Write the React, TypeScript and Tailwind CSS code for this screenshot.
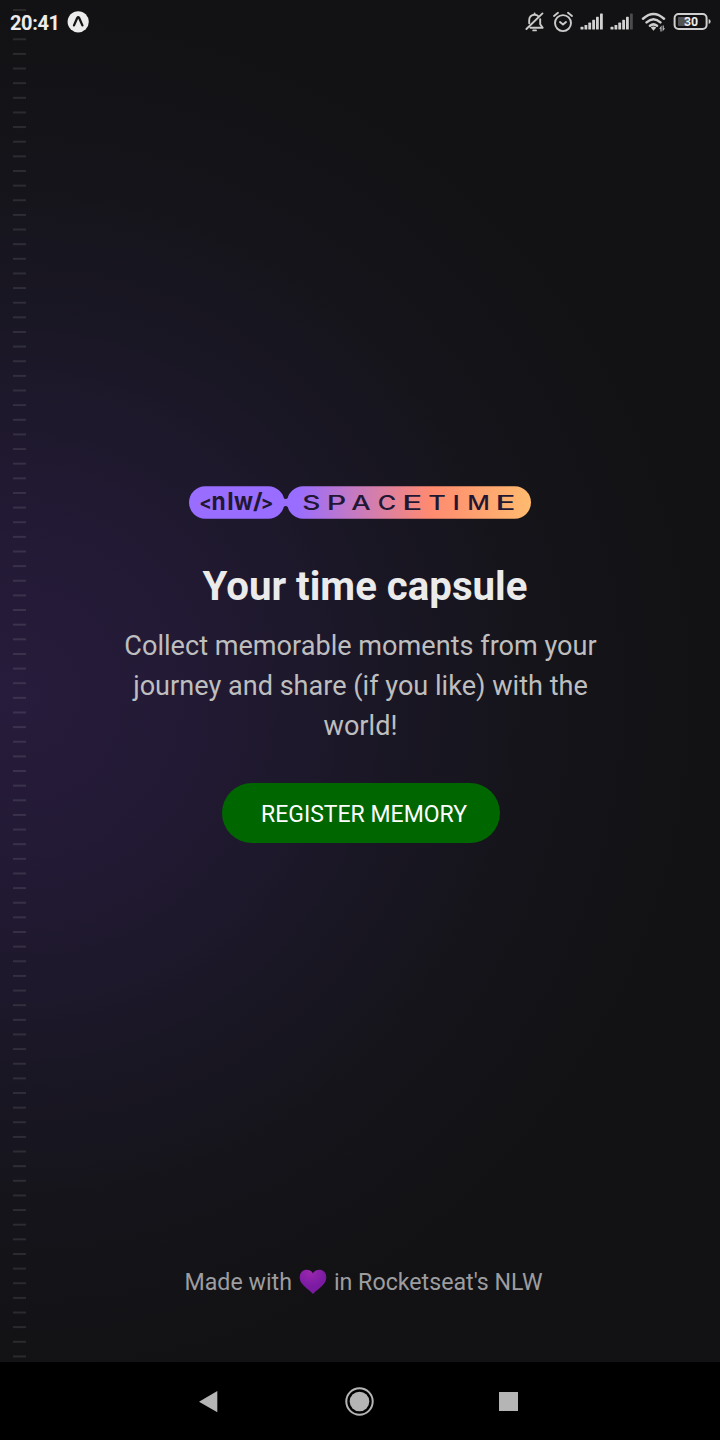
import React from "react";

const STRIPES = Array.from({ length: 93 }, (_, i) => 10 + i * 14.635);

type Glyph = { c: string; x: number; w: number; y: number; size: number };

const TAG: Glyph[] = [
  { c: "<", x: 199.3, w: 12.6, y: 509.4, size: 18.5 },
  { c: "n", x: 211.6, w: 14.2, y: 510, size: 25 },
  { c: "l", x: 227.2, w: 6.4, y: 510, size: 24 },
  { c: "w", x: 234, w: 19, y: 510, size: 25 },
  { c: "/", x: 253, w: 9.6, y: 509, size: 22 },
  { c: ">", x: 260.8, w: 12.6, y: 509.4, size: 18.5 },
];

const NAME: Glyph[] = [
  { c: "S", x: 302.2, w: 18.2, y: 510, size: 19.4 },
  { c: "P", x: 326.8, w: 19.5, y: 510, size: 19.4 },
  { c: "A", x: 351.3, w: 19.4, y: 510, size: 19.4 },
  { c: "C", x: 377.8, w: 18.4, y: 510, size: 19.4 },
  { c: "E", x: 402.2, w: 20, y: 510, size: 19.4 },
  { c: "T", x: 428.3, w: 17.6, y: 510, size: 19.4 },
  { c: "I", x: 452.5, w: 7.4, y: 510, size: 19.4 },
  { c: "M", x: 467.2, w: 22.6, y: 510, size: 19.4 },
  { c: "E", x: 495.6, w: 20, y: 510, size: 19.4 },
];

function Glyphs({ items }: { items: Glyph[] }) {
  return (
    <>
      {items.map((g) => (
        <text key={g.x} x={g.x} y={g.y} fontSize={g.size} textLength={g.w} lengthAdjust="spacingAndGlyphs">{g.c}</text>
      ))}
    </>
  );
}

function Background() {
  return (
    <svg className="absolute inset-0" width="720" height="1362" viewBox="0 0 720 1362" aria-hidden="true">
      <defs>
        <radialGradient id="glow" gradientUnits="userSpaceOnUse" cx="15" cy="695" r="690">
          <stop offset="0" stopColor="#271c3b" />
          <stop offset="0.22" stopColor="#231a36" />
          <stop offset="0.5" stopColor="#1b1727" />
          <stop offset="0.75" stopColor="#15141a" />
          <stop offset="1" stopColor="#121214" />
        </radialGradient>
      </defs>
      <rect width="720" height="1362" fill="url(#glow)" />
      {STRIPES.map((y) => (
        <rect key={y} x="13" y={y - 1} width="13" height="2" fill="#ffffff" opacity="0.1" />
      ))}
    </svg>
  );
}

function Signal({ weak }: { weak?: boolean }) {
  return (
    <svg width="24" height="18" viewBox="0 0 24 18" fill="#d2d2d2">
      <rect x="0.5" y="13.8" width="3" height="2.7" rx="0.6" />
      <rect x="4.5" y="12" width="2.8" height="4.5" rx="0.6" />
      <rect x="8.3" y="9.6" width="2.8" height="6.9" rx="0.6" />
      <rect x="12.2" y="6.8" width="2.8" height="9.7" rx="0.6" />
      <rect x="16" y="3.8" width="2.8" height="12.7" rx="0.6" />
      <rect x="20" y="0.6" width="2.8" height="15.9" rx="0.6" opacity={weak ? 0.3 : 1} />
    </svg>
  );
}

function StatusBar() {
  return (
    <header className="relative flex h-[43px] items-center pr-[8px] pl-[10px]">
      <span className="mt-[2px] w-[49px] text-[20px] leading-[24px] font-bold tracking-[-0.4px] text-[#ececec]">20:41</span>
      <svg className="ml-[8px]" width="22" height="22" viewBox="0 0 22 22">
        <circle cx="11.2" cy="10.8" r="10.6" fill="#ececec" />
        <path d="M7 14.4 10.2 7Q11.2 5.4 12.2 7L15.4 14.4" fill="none" stroke="#151516" strokeWidth="2.3" strokeLinecap="round" strokeLinejoin="round" />
      </svg>
      <div className="ml-auto flex items-center">
        <svg width="20" height="20" viewBox="0 0 20 20" fill="none" stroke="#cbcbcb" strokeWidth="1.9" strokeLinecap="round" strokeLinejoin="round">
          <path d="M4.2 11.3V8C4.2 5 6.3 2.8 9.6 2.8 11.2 2.8 12.5 3.4 13.4 4.3M15.2 7.1V12.2L17.7 15.7H5.5M9.6 2.5V1.4M8.2 18.4H11M1.4 17 17.5 1.4" />
        </svg>
        <svg className="ml-[7px]" width="22" height="22" viewBox="0 0 22 22" fill="none" stroke="#cbcbcb" strokeWidth="1.9" strokeLinecap="round" strokeLinejoin="round">
          <circle cx="11" cy="12.1" r="8" />
          <path d="M2 5 6 1.8M20 5 16 1.8M8 11 11 13.5 14 11" />
        </svg>
        <div className="ml-[6px] flex"><Signal /></div>
        <div className="ml-[6px] flex"><Signal weak /></div>
        <svg className="ml-[7px]" width="26" height="20" viewBox="0 0 26 20">
          <g fill="none" stroke="#cecece" strokeWidth="2.5" strokeLinecap="round">
            <path d="M2 6.7Q12.5-2.8 23 6.7M5.6 10.4Q12.5 4 19.4 10.4M9 13.8Q12.5 11 16 13.8" />
          </g>
          <path d="M9.8 15.5Q12.5 13.6 15.2 15.5L12.5 18.8Z" fill="#cecece" />
          <path d="M18.1 16.7 20.6 13.4V19.4H19.4V16.7ZM24.1 16.3 21.6 19.6V13.6H22.8V16.3Z" fill="#bbb" />
        </svg>
        <svg className="ml-[6px]" width="39" height="19" viewBox="0 0 39 19">
          <rect x="1.6" y="2" width="32" height="15" rx="4" fill="none" stroke="#cfcfcf" strokeWidth="2" />
          <rect x="5" y="5" width="10" height="9" rx="1" fill="#525252" />
          <path d="M35.6 7.2Q37.6 7.2 37.6 9.5T35.6 11.8Z" fill="#cfcfcf" />
          <text x="18" y="13.9" textAnchor="middle" fill="#ededed" fontSize="12.3" fontWeight="700" fontFamily="Roboto, sans-serif">30</text>
        </svg>
      </div>
    </header>
  );
}

function Logo() {
  return (
    <svg width="344" height="34" viewBox="188 485 344 34" role="img" aria-label="nlw spacetime">
      <defs>
        <linearGradient id="pill" gradientUnits="userSpaceOnUse" x1="297" y1="0" x2="531" y2="0">
          <stop offset="0" stopColor="#996dff" />
          <stop offset="0.57" stopColor="#ff8a70" />
          <stop offset="1" stopColor="#ffbb6f" />
        </linearGradient>
      </defs>
      <rect x="189" y="486.2" width="95.5" height="32.5" rx="16.25" fill="#996dff" />
      <path d="M281 495Q285.7 503.2 290.5 495V510Q285.7 501.8 281 510Z" fill="#996dff" />
      <rect x="284" y="499.8" width="4" height="5.2" fill="#996dff" />
      <rect x="287" y="486.2" width="244" height="32.5" rx="16.25" fill="url(#pill)" />
      <g fill="#211733" fontWeight="700" fontFamily="Inter, sans-serif">
        <Glyphs items={TAG} />
      </g>
      <g fill="#211733" fontWeight="500" fontFamily="Inter, sans-serif">
        <Glyphs items={NAME} />
      </g>
    </svg>
  );
}

function Heart() {
  return (
    <svg className="mr-[6px] ml-[7px] shrink-0" width="28" height="26" viewBox="0 0 28 26" role="img" aria-label="purple heart">
      <defs>
        <radialGradient id="heart" cx="0.4" cy="0.1" r="0.6">
          <stop offset="0" stopColor="#9c27b0" />
          <stop offset="1" stopColor="#7a1ba2" />
        </radialGradient>
      </defs>
      <path d="M14 4.6C12 .2 6.2-.6 3 2.5 0 5.4.1 10.4 2.5 14 5.4 18.3 10.8 21.4 14 25 17.2 21.4 22.6 18.3 25.5 14 27.9 10.4 28 5.4 25 2.5 21.8-.6 16 .2 14 4.6Z" fill="url(#heart)" />
    </svg>
  );
}

export default function App() {
  return (
    <div className="relative flex h-[1440px] w-[720px] flex-col overflow-hidden bg-[#121214] font-['Roboto',sans-serif]">
      <Background />
      <StatusBar />
      <main className="relative flex flex-1 flex-col items-center pt-[442px]">
        <Logo />
        <h1 className="mt-[44px] ml-[10px] text-[40.2px] leading-[48px] font-bold whitespace-nowrap text-[#ebebeb]">Your time capsule</h1>
        <p className="mt-[15px] ml-px text-center text-[27.1px] leading-[40px] whitespace-nowrap text-[#bebebf]">
          Collect memorable moments from your<br />journey and share (if you like) with the<br />world!
        </p>
        <button className="mt-[37px] ml-[2px] flex h-[60px] w-[278px] items-center justify-center rounded-full bg-[#006600] pt-[4px] pl-[6px] text-[23px] whitespace-nowrap text-white">REGISTER MEMORY</button>
        <footer className="mt-auto mb-[64px] ml-[7px] flex h-[32px] items-center text-[23.2px] leading-[32px] whitespace-nowrap text-[#9d9da0]">
          <span>Made with</span>
          <Heart />
          <span className="pl-px">in Rocketseat's NLW</span>
        </footer>
      </main>
      <nav className="relative flex h-[78px] shrink-0 bg-black">
        <svg width="720" height="78" viewBox="0 1362 720 78" fill="#b5b5b5">
          <path d="M199 1401.7 217.3 1391V1412.3Z" />
          <circle cx="359.5" cy="1401.5" r="13.2" fill="none" stroke="#b5b5b5" strokeWidth="2" />
          <circle cx="359.5" cy="1401.5" r="9.8" />
          <rect x="499" y="1392" width="19" height="19" />
        </svg>
      </nav>
    </div>
  );
}
